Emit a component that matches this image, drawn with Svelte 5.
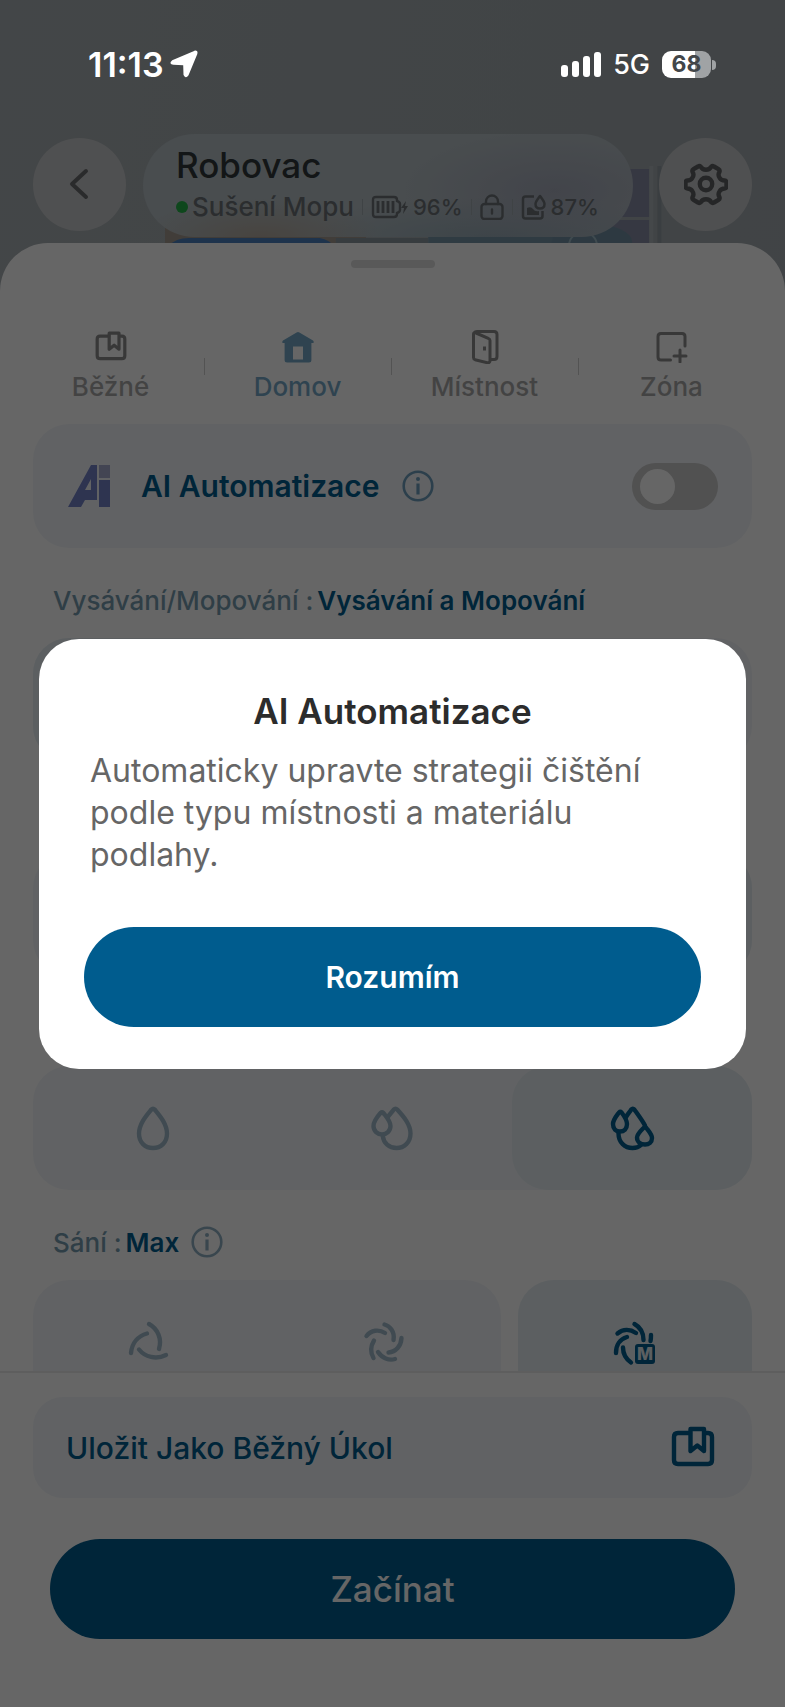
<script lang="ts">
  let aiEnabled = $state(false);
  let activeTab = $state("home");
  let cleanMode = $state("both");
  let cleanPath = $state("deep");
  let water = $state("high");
  let suction = $state("max");
  let showInfo = $state(true);

  const TABS = [
    { id: "routine", label: "Běžné" },
    { id: "home", label: "Domov" },
    { id: "room", label: "Místnost" },
    { id: "zone", label: "Zóna" },
  ];
  const SIGNAL = [12, 16, 21, 25];
</script>

{#snippet bookmark(size: number)}
  <svg width={size} height={size} viewBox="0 0 44 44" fill="none" stroke="currentColor" stroke-width="4.400" stroke-linejoin="round" stroke-linecap="round" aria-hidden="true">
    <path d="M19 7H7q-4 0-4 4v23q0 4 4 4h30q4 0 4-4V11q0-4-4-4h-2" />
    <path d="M19.500 3h13.500v22l-6.700-5.500-6.800 5.500z" />
  </svg>
{/snippet}

{#snippet info()}
  <svg width="32" height="32" viewBox="0 0 32 32" fill="none" stroke="currentColor" stroke-width="2.600" aria-hidden="true">
    <circle cx="16" cy="16" r="14.300" />
    <path d="M16 13.500v11" stroke-width="3.200" />
    <circle cx="16" cy="9" r="2" fill="currentColor" stroke="none" />
  </svg>
{/snippet}

{#snippet tabIcon(id: string)}
  {#if id === "routine"}
    {@render bookmark(32)}
  {:else if id === "home"}
    <svg width="32" height="32" viewBox="0 0 32 32" aria-hidden="true">
      <path fill="currentColor" fill-rule="evenodd" d="M14.600 1.500q1.400-.9 2.800 0L31 9.500q1.200 1 .4 2.500h-2v17q0 2.500-2.500 2.500H5.100q-2.500 0-2.500-2.500V12h-2q-.8-1.500.4-2.500zM11 15.500v13h10v-13z" />
    </svg>
  {:else if id === "room"}
    <svg width="32" height="34" viewBox="0 0 32 34" fill="none" stroke="currentColor" stroke-width="3" stroke-linejoin="round" stroke-linecap="round" aria-hidden="true">
      <path d="M5 3q1-1.400 3-1.400h17q3 0 3 3v22q0 3-3 3h-3" />
      <path d="M4.500 4.500v23q0 1.600 1.600 2.200l12 3q2.300.5 2.900-1.600V10.500q0-1.600-1.700-2.200L7 3q-2.500-.6-2.500 1.500z" />
      <path d="M15.500 16.500v4" stroke-width="3" stroke-linecap="butt" />
    </svg>
  {:else}
    <svg width="32" height="32" viewBox="0 0 32 32" fill="none" stroke="currentColor" stroke-width="3" stroke-linejoin="round" stroke-linecap="round" aria-hidden="true">
      <path d="M14.500 29H5q-3 0-3-3V5.500q0-3 3-3h21q3 0 3 3V15" />
      <path d="M18 25h12M24 19v12" />
    </svg>
  {/if}
{/snippet}

{#snippet waterIcon(level: string)}
  <svg width="48" height="48" viewBox="0 0 48 48" fill="none" stroke="currentColor" stroke-width="4.400" stroke-linejoin="round" stroke-linecap="round" aria-hidden="true">
    {#if level === "low"}
      <path d="M22.300 5.500q1.700-1.800 3.400 0C31 12 38 20 38 29.500 38 38.500 32 44 24 44S10 38.500 10 29.500C10 20 17 12 22.300 5.500z" />
    {:else if level === "mid"}
      <path d="M19.500 13.500c2-3 4.500-5.500 6.300-8q1.700-1.800 3.400 0C35 12 42.500 20 42.500 29.500 42.500 38.500 36 44 28.500 44 21 44 15.500 39 14.800 32" />
      <path d="M12.700 8.800q1.300-1.300 2.600 0c3.200 4.200 7.200 8.200 7.200 13.200 0 5-4 8.500-8.500 8.500S5.500 27 5.500 22c0-5 3.500-9 7.200-13.200z" />
    {:else}
      <path d="M18 13c1.800-3 3.800-5.200 5.300-7.500q1.500-1.800 3 0C29.500 10 34 16 37 21.500M10.500 29.500C10.500 38.500 17 44 24.500 44c3.500 0 6.500-1 8.500-3" />
      <path d="M11 8.500q1.300-1.300 2.600 0c3 4 5.400 7.500 5.400 11.500 0 5-3 7.500-7 7.500S5 25 5 20c0-4 3-7.500 6-11.500z" />
      <path d="M36 23.500q1-1 2 0c3 4 6 7 6 10.500 0 4-3 6.500-7 6.500s-8-2.500-8-7c0-3.500 4-7 7-10z" />
    {/if}
  </svg>
{/snippet}

{#snippet fanIcon(level: string)}
  <svg width="48" height="48" viewBox="0 0 48 48" fill="none" stroke="currentColor" stroke-width="4.400" stroke-linecap="round" aria-hidden="true">
    {#if level === "low"}
      <path d="M23 6C32 11 36 21 33 31M21 15.500C12 18 6 25 5 35M13 31.500C19 39 30 42 40 37" />
    {:else if level === "mid"}
      <path d="M24.500 6.500C30 8 35 14 33.500 22M6.500 18C11 12 19 11 25 15M14 22.500C10 29 10 34 13.500 40M18 34C22 40 29 43 35 41M28.500 34.500C36 34 41 28 41.500 20" />
    {:else}
      <path d="M23.500 6C29 9 32.500 14 32.500 22M6.500 15.500C12 11 19 11 25 15M5 35C5 27 9 21 16 19M12 29.500C12 37 15 41 20 44.500M40 17c0 2 0 4-.5 6" />
      <rect x="24" y="26" width="20" height="20" rx="3" fill="currentColor" stroke="none" />
      <text x="34" y="42" class="fan-max">M</text>
    {/if}
  </svg>
{/snippet}

<div class="screen">
  <div class="status">
    <div class="clock">
      <span>11:13</span>
      <svg width="28" height="28" viewBox="0 0 28 28" aria-hidden="true">
        <path d="M24.500 1.800q2.600-.8 1.900 1.700L17.500 25q-1.800 2.600-3-.3l-.3-9.700q0-.8-.8-.8l-10-.4q-3.500-.6-.8-2.600z" fill="#fff" stroke="#fff" stroke-width="2" stroke-linejoin="round" />
      </svg>
    </div>
    <div class="phone">
      <div class="signal">
        {#each SIGNAL as h}
          <i style="height:{h}px"></i>
        {/each}
      </div>
      <span class="network">5G</span>
      <div class="cell"><span>68</span></div>
    </div>
  </div>

  <header class="top">
    <svg class="map" viewBox="0 0 500 80" preserveAspectRatio="none" aria-hidden="true">
      <rect x="0" y="62" width="200" height="18" fill="#a39a90" />
      <path d="M4 80q6-8 20-8h130q10 2 14 8z" fill="#4c7fbd" />
      <rect x="170" y="72" width="92" height="8" fill="#8a979e" />
      <rect x="262" y="60" width="200" height="20" fill="#7593a6" />
      <path d="M440 3h42v48h-42zM440 54h42v26h-42z" fill="#888da5" />
      <ellipse cx="425" cy="76" rx="40" ry="18" fill="#7090a3" />
      <circle cx="416" cy="80" r="14" fill="none" stroke="#9fbac6" stroke-width="2" />
      <rect x="482" y="0" width="4" height="80" fill="#acb3b8" />
      <rect x="490" y="0" width="4" height="80" fill="#929ca2" />
    </svg>
    <button class="round" aria-label="Zpět">
      <svg width="32" height="36" viewBox="0 0 32 36" fill="none" stroke="currentColor" stroke-width="4" stroke-linecap="round" stroke-linejoin="round" aria-hidden="true">
        <path d="M22 5L8 18l14 13" />
      </svg>
    </button>
    <div class="device">
      <h1>Robovac</h1>
      <div class="state">
        <i class="dot"></i>
        <span class="activity">Sušení Mopu</span>
        <i class="bar"></i>
        <svg width="38" height="24" viewBox="0 0 38 24" fill="none" stroke="currentColor" stroke-width="2.400" aria-hidden="true">
          <path d="M5 2h18q3 0 3 3v1q3 1 3 3v6q0 2-3 3v1q0 3-3 3H5q-3 0-3-3V5q0-3 3-3z" />
          <path d="M7 6v12M12 6v12M17 6v12M22 6v12" stroke-width="2.800" />
          <path d="M35 6l-5 7h3l-1 6 5-8h-3z" fill="currentColor" stroke="none" />
        </svg>
        <span>96%</span>
        <i class="bar"></i>
        <svg width="24" height="26" viewBox="0 0 24 26" fill="none" stroke="currentColor" stroke-width="2.400" stroke-linecap="round" aria-hidden="true">
          <rect x="1.500" y="10" width="21" height="15" rx="3" />
          <path d="M6 10V7.500a6 6 0 0 1 12 0V10M12 15.500v4" />
        </svg>
        <i class="bar"></i>
        <svg width="26" height="26" viewBox="0 0 26 26" fill="none" stroke="currentColor" stroke-width="2.500" stroke-linejoin="round" aria-hidden="true">
          <path d="M13 2.500H4.500q-2.500 0-2.500 2.500v17q0 2.500 2.500 2.500H19q2.500 0 2.500-2.500v-5" />
          <path d="M19 2c-2.500 3.500-4.500 5.500-4.500 8 0 3 2 4.500 4.500 4.500s4.500-1.500 4.500-4.500c0-2.500-2-4.500-4.500-8z" />
          <path d="M6 14q4-2 6 1t6 2v4H6z" fill="currentColor" stroke="none" />
        </svg>
        <span>87%</span>
      </div>
    </div>
    <button class="round" aria-label="Nastavení">
      <svg width="44" height="44" viewBox="0 0 44 44" fill="none" stroke="currentColor" stroke-width="4.400" stroke-linejoin="round" aria-hidden="true">
        <path d="M14 4.500q1.500-1 2.800.3 1.500 3 5.200 3t5.200-3q1.300-1.300 2.800-.3l4.500 2.700q1.600 1 .9 2.800-1.800 3 .2 5.800 1.700 2.700 5 2.700 1.900.2 1.900 2v4q0 1.800-1.900 2-3.300 0-5 2.700-2 2.800-.2 5.800.7 1.800-.9 2.800L30 40.500q-1.500 1-2.800-.3-1.500-3-5.200-3t-5.200 3q-1.300 1.300-2.800.3l-4.500-2.700q-1.600-1-.9-2.800 1.800-3-.2-5.800-1.700-2.700-5-2.700-1.900-.2-1.900-2v-4q0-1.800 1.900-2 3.300 0 5-2.700 2-2.800.2-5.800-.7-1.800.9-2.800z" />
        <circle cx="22" cy="22" r="6.200" />
      </svg>
    </button>
  </header>

  <main class="sheet">
    <i class="handle"></i>
    <nav class="tabs">
      {#each TABS as tab}
        <button class="tab" class:active={activeTab === tab.id} onclick={() => (activeTab = tab.id)}>
          <span class="tab-icon">{@render tabIcon(tab.id)}</span>
          {tab.label}
        </button>
      {/each}
    </nav>

    <div class="settings">
      <section class="card ai">
        <svg width="42" height="42" viewBox="0 0 42 42" fill="#7483c8" aria-hidden="true">
          <path d="M23 0h6v35H17l-4 7H0zM23 14l-6 11h6z" fill-rule="evenodd" />
          <rect x="31" y="0" width="11" height="13" fill="#a9acd0" />
          <rect x="31" y="15" width="11" height="27" />
        </svg>
        <label for="ai-switch">AI Automatizace</label>
        <button class="info" aria-label="Informace" onclick={() => (showInfo = true)}>{@render info()}</button>
        <input id="ai-switch" class="switch" type="checkbox" role="switch" bind:checked={aiEnabled} />
      </section>

      <h2><span>Vysávání/Mopování :</span><b>Vysávání a Mopování</b></h2>
      <div class="card options">
        {#each ["both", "vacuum", "mop"] as mode}
          <label class="option" class:selected={cleanMode === mode}>
            <input type="radio" name="mode" value={mode} aria-label={mode} bind:group={cleanMode} />
          </label>
        {/each}
      </div>

      <div class="card options spaced">
        {#each ["fast", "standard", "deep"] as path}
          <label class="option" class:selected={cleanPath === path}>
            <input type="radio" name="path" value={path} aria-label={path} bind:group={cleanPath} />
          </label>
        {/each}
      </div>

      <div class="card options spaced">
        {#each ["low", "mid", "high"] as level}
          <label class="option" class:selected={water === level}>
            <input type="radio" name="water" value={level} aria-label={level} bind:group={water} />
            {@render waterIcon(level)}
          </label>
        {/each}
      </div>

      <h2><span>Sání :</span><b>Max</b><button class="info pale" aria-label="Informace">{@render info()}</button></h2>
      <div class="suction">
        <div class="card options">
          {#each ["low", "mid"] as level}
            <label class="option" class:selected={suction === level}>
              <input type="radio" name="suction" value={level} aria-label={level} bind:group={suction} />
              {@render fanIcon(level)}
            </label>
          {/each}
        </div>
        <div class="card options">
          <label class="option" class:selected={suction === "max"}>
            <input type="radio" name="suction" value="max" aria-label="max" bind:group={suction} />
            {@render fanIcon("max")}
          </label>
        </div>
      </div>
    </div>

    <footer>
      <button class="card save">
        <span>Uložit Jako Běžný Úkol</span>
        {@render bookmark(44)}
      </button>
      <button class="primary start">Začínat</button>
    </footer>
  </main>

  {#if showInfo}
    <div class="backdrop">
      <div class="dialog" role="dialog" aria-modal="true" aria-labelledby="dialog-title">
        <h3 id="dialog-title">AI Automatizace</h3>
        <p>Automaticky upravte strategii čištění podle typu místnosti a materiálu podlahy.</p>
        <button class="primary" onclick={() => (showInfo = false)}>Rozumím</button>
      </div>
    </div>
  {/if}
</div>

<style>
  :global(body) { margin: 0; }
  .screen {
    --primary: #005c8e;
    --card: #f3f6fa;
    --selected: #e5eef2;
    position: relative; display: flex; flex-direction: column; height: 100vh; overflow: hidden;
    background: linear-gradient(100deg, #a8afb3, #a0a8ad);
    font-family: Inter, "Liberation Sans", sans-serif; font-weight: 500;
  }
  button { border: 0; padding: 0; background: none; font: inherit; color: inherit; cursor: pointer; }
  svg { display: block; flex: none; }

  .status { position: relative; z-index: 2; display: flex; justify-content: space-between; align-items: center; height: 128px; padding: 0 74px 0 88px; box-sizing: border-box; color: #fff; }
  .clock, .phone { display: flex; align-items: center; }
  .clock { gap: 6px; font-size: 34px; font-weight: 600; }
  .signal { display: flex; align-items: flex-end; gap: 4px; }
  .signal i { width: 7px; border-radius: 3px; background: #fff; }
  .network { margin: 0 12px; font-size: 27px; }
  .cell { position: relative; width: 49px; height: 27px; border-radius: 9px; background: linear-gradient(90deg, #fff 68%, #a0a3a5 68%); color: #424649; text-align: center; font-size: 23px; font-weight: 700; line-height: 27px; }
  .cell::after { content: ""; position: absolute; left: 50px; top: 9px; width: 4px; height: 10px; border-radius: 0 5px 5px 0; background: #a0a3a5; }

  .top { position: relative; display: flex; align-items: center; gap: 17px; height: 115px; padding: 0 33px; box-sizing: border-box; }
  .map { position: absolute; left: 21%; top: 38px; width: 64%; height: 80px; }
  .round { position: relative; display: grid; place-items: center; width: 93px; height: 93px; margin-bottom: 3px; border-radius: 50%; background: #c6c8ca; color: #6a6c6e; }
  .round:last-child { margin-left: 9px; color: #5e6062; }
  .device {
    position: relative; flex: 1; min-width: 0; height: 103px; margin-bottom: 1px; padding: 11px 0 0 33px; box-sizing: border-box; border-radius: 52px; white-space: nowrap;
    background:
      radial-gradient(ellipse 120px 38px at 24% 100%, #b3aaa0, transparent),
      radial-gradient(ellipse 150px 60px at 84% 55%, #a6abba, transparent),
      radial-gradient(ellipse 200px 40px at 72% 100%, #98abb6, transparent),
      #b6c0c5;
  }
  h1 { margin: 0; font-size: 35px; font-weight: 500; line-height: 40px; color: #30373a; }
  .state { display: flex; align-items: center; gap: 4px; height: 44px; font-size: 22px; color: #6b7276; }
  .activity { font-size: 26px; }
  .dot { width: 12px; height: 12px; border-radius: 50%; background: #24b147; }
  .bar { width: 1px; height: 16px; margin: 0 4px; background: #9da7ad; }

  .sheet { position: relative; flex: 1; min-height: 0; display: flex; flex-direction: column; border-radius: 48px 48px 0 0; background: #fff; }
  .handle { width: 84px; height: 8px; margin: 17px auto 0; border-radius: 4px; background: #dedede; }
  .tabs { display: grid; grid-template-columns: repeat(4, 1fr); height: 156px; padding: 61px 20px 0 17px; box-sizing: border-box; }
  .tab { position: relative; display: flex; flex-direction: column; align-items: center; gap: 5px; height: 76px; font-size: 26px; line-height: 34px; color: #a9a9a9; }
  .tab-icon { display: grid; place-items: center; height: 36px; color: #8c8c8c; }
  .tab + .tab::before { content: ""; position: absolute; left: 0; top: 29px; width: 1px; height: 17px; background: #d0d0d0; }
  .tab.active, .tab.active .tab-icon { color: #75a9c8; }

  .settings { flex: 1; min-height: 0; overflow: hidden; padding: 0 33px; }
  .card { border-radius: 36px; background: var(--card); }
  .ai { display: flex; align-items: center; height: 124px; padding: 0 34px 0 35px; color: var(--primary); }
  .ai label { margin: 0 22px 0 31px; font-size: 30px; font-weight: 600; }
  .info { color: #6e9fbe; }
  .pale { color: #8fafc2; margin-left: 8px; }
  .switch { position: relative; appearance: none; width: 86px; height: 47px; margin: 0 0 0 auto; border-radius: 24px; background: #cacaca; cursor: pointer; }
  .switch::after { content: ""; position: absolute; left: 8px; top: 6px; width: 35px; height: 35px; border-radius: 50%; background: #fff; }
  .switch:checked { background: var(--primary); }
  .switch:checked::after { left: 43px; }

  h2 { display: flex; align-items: center; gap: 4px; height: 40px; margin: 0; padding: 32px 20px 18px; font-size: 26px; font-weight: 500; color: #769caf; white-space: nowrap; }
  h2 b { font-weight: 600; color: var(--primary); }
  .options { display: grid; grid-auto-flow: column; grid-auto-columns: 1fr; height: 124px; }
  .spaced { margin-top: 90px; }
  .option { position: relative; display: grid; place-items: center; border-radius: 36px; color: #a0bacb; cursor: pointer; }
  .option.selected { background: var(--selected); color: var(--primary); }
  .option input { position: absolute; opacity: 0; }
  .suction { display: grid; grid-template-columns: 2fr 1fr; gap: 17px; }
  .fan-max { fill: #e4edf2; stroke: none; font-size: 17px; font-weight: 800; text-anchor: middle; }

  footer { display: flex; flex-direction: column; padding: 24px 33px 68px; border-top: 2px solid #ebebeb; background: #fff; }
  .save { display: flex; justify-content: space-between; align-items: center; height: 101px; padding: 0 37px 0 33px; border-radius: 30px; font-size: 30px; color: var(--primary); }
  .primary { height: 100px; border-radius: 50px; background: var(--primary); color: #fff; font-size: 30px; font-weight: 600; }
  .start { margin: 41px 17px 0; font-size: 35px; font-weight: 500; }

  .backdrop { position: absolute; inset: 0; z-index: 1; display: grid; align-items: center; padding: 0 39px; background: rgba(0, 0, 0, 0.6); }
  .dialog { display: flex; flex-direction: column; padding: 50px 45px 42px; border-radius: 40px; background: #fff; }
  h3 { margin: 0 0 17px; font-size: 35px; font-weight: 600; line-height: 44px; text-align: center; color: #2c2c2c; }
  p { margin: 0 0 51px; padding: 0 6px; font-size: 32px; font-weight: 400; line-height: 42px; color: #666; }
</style>
